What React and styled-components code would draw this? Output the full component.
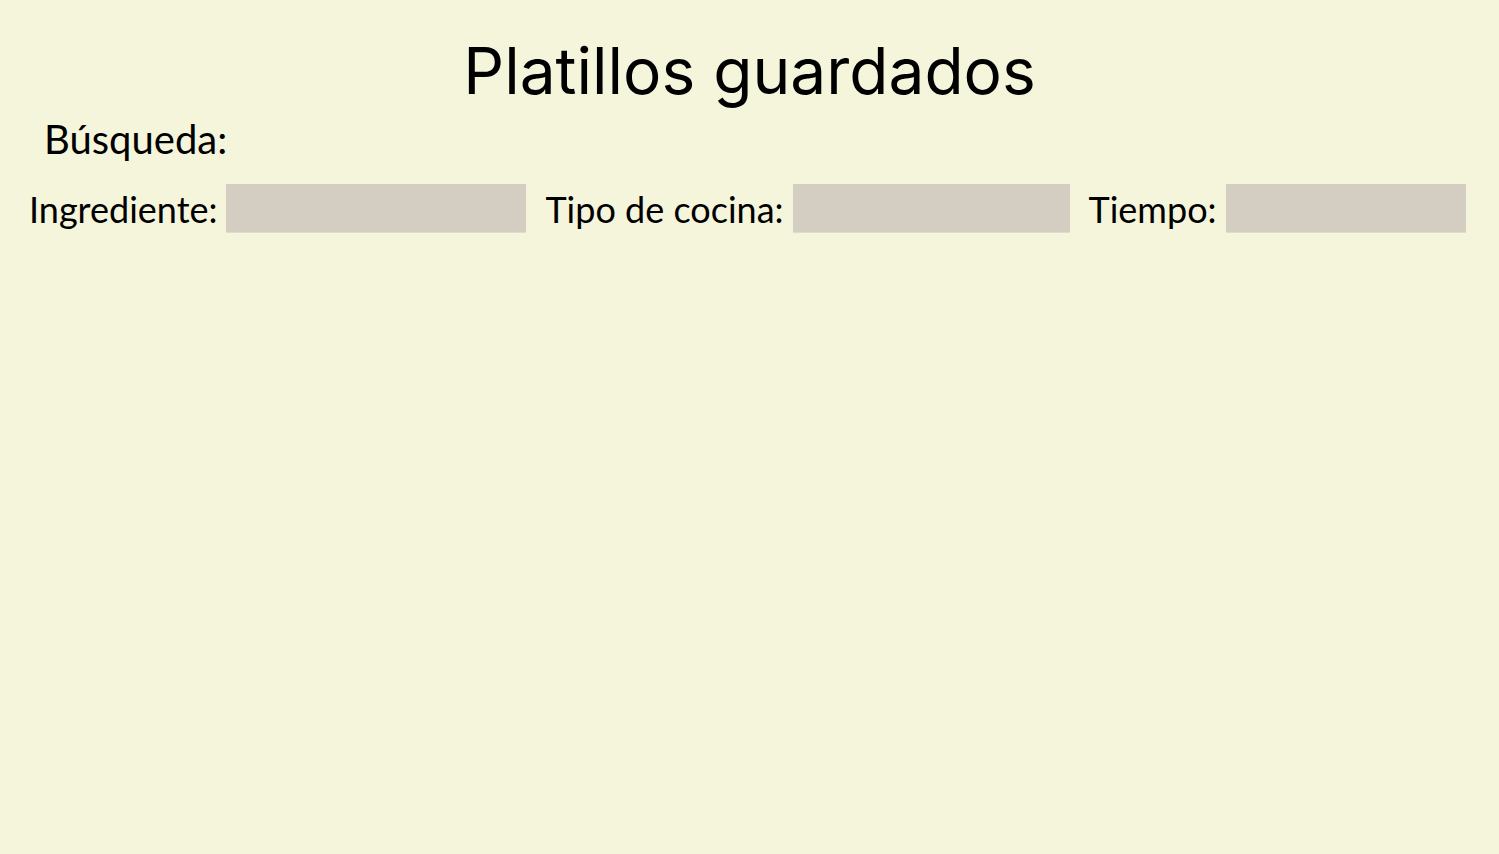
import React from "react";
import { styled, createGlobalStyle } from "styled-components";

const GlobalStyle = createGlobalStyle`
  body {
    margin: 0;
    background-color: #f5f5dc;
  }
`;

const App = () => {
  return (
    <Page>
      <GlobalStyle />
      <Title>Platillos guardados</Title>
      <SearchTitle>Búsqueda:</SearchTitle>
      <FilterRow>
        <Field>
          <Label>Ingrediente:</Label>
          <Input $width={300} />
        </Field>
        <Field>
          <Label>Tipo de cocina:</Label>
          <Input $width={277} />
        </Field>
        <Field>
          <Label>Tiempo:</Label>
          <Input $width={240} />
        </Field>
      </FilterRow>
    </Page>
  );
};

const Page = styled.div`
  min-height: 854px;
  background-color: #f5f5dc;
  padding: 0 29px;
`;

const Title = styled.h1`
  margin: 0;
  padding-top: 33px;
  font-family: Inter, "Noto Sans", sans-serif;
  font-weight: 400;
  font-size: 64px;
  line-height: 76px;
  text-align: center;
  color: #000;
`;

const SearchTitle = styled.h2`
  margin: 8px 0 0 15px;
  font-family: Lato, "Noto Sans", sans-serif;
  font-weight: 400;
  font-size: 40px;
  line-height: 44px;
  color: #000;
`;

const FilterRow = styled.div`
  display: flex;
  align-items: center;
  gap: 19px;
  margin-top: 23px;
`;

const Field = styled.div`
  display: flex;
  align-items: center;
  gap: 9px;
`;

const Label = styled.label`
  font-family: Lato, "Noto Sans", sans-serif;
  font-size: 36px;
  color: #000;
`;

const Input = styled.input`
  width: ${(p) => p.$width}px;
  height: 49px;
  box-sizing: border-box;
  border: none;
  border-bottom: 1px solid #e0dbd2;
  background-color: #d3cdc2;
  outline: none;
`;

export default App;
